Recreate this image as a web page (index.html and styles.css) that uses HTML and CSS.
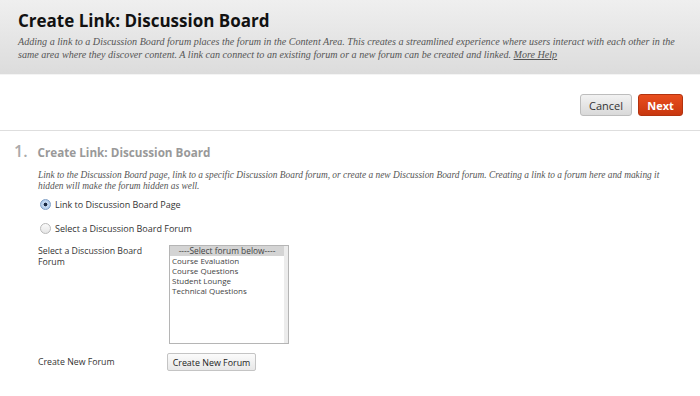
FILE: index.html
```html
<!DOCTYPE html>
<html>
<head>
<meta charset="utf-8">
<link rel="stylesheet" href="styles.css">
</head>
<body>
<div class="page-header">
  <h1 class="page-title">Create Link: Discussion Board</h1>
  <p class="page-desc">Adding a link to a Discussion Board forum places the forum in the Content Area. This creates a streamlined experience where users interact with each other in the<br>same area where they discover content. A link can connect to an existing forum or a new forum can be created and linked. <a class="help-link" href="#">More Help</a></p>
</div>
<div class="action-bar">
  <button class="btn btn-cancel">Cancel</button>
  <button class="btn btn-next">Next</button>
</div>
<div class="step">
  <div class="step-head">
    <span class="step-num">1.</span>
    <h2 class="step-title">Create Link: Discussion Board</h2>
  </div>
  <div class="step-body">
    <p class="step-instr">Link to the Discussion Board page, link to a specific Discussion Board forum, or create a new Discussion Board forum. Creating a link to a forum here and making it<br>hidden will make the forum hidden as well.</p>
    <label class="radio-row first"><span class="radio checked"></span>Link to Discussion Board Page</label>
    <label class="radio-row"><span class="radio"></span>Select a Discussion Board Forum</label>
    <div class="field-row">
      <div class="field-label">Select a Discussion Board<br>Forum</div>
      <div class="listbox">
        <div class="opt selected">----Select forum below----</div>
        <div class="opt">Course Evaluation</div>
        <div class="opt">Course Questions</div>
        <div class="opt">Student Lounge</div>
        <div class="opt">Technical Questions</div>
      </div>
    </div>
    <div class="field-row create-row">
      <div class="field-label">Create New Forum</div>
      <button class="btn-small">Create New Forum</button>
    </div>
  </div>
</div>
</body>
</html>
```
FILE: styles.css
```css
* { box-sizing: border-box; }
html, body { margin: 0; padding: 0; background: #fff; }
body {
  font-family: "Open Sans", "DejaVu Sans", sans-serif;
  color: #333;
  width: 700px;
  height: 396px;
  overflow: hidden;
}
.page-header {
  height: 75px;
  background: linear-gradient(#efefef, #dcdcdc);
  border-bottom: 1px solid #f4f4f4;
  padding: 8px 18px 0;
}
.page-title {
  margin: 0;
  font-family: "Open Sans", sans-serif;
  font-weight: 700;
  font-size: 17px;
  line-height: 26px;
  color: #111;
}
.page-desc {
  margin: 1px 0 0;
  font-family: "Liberation Serif", serif;
  font-style: italic;
  font-size: 10.1px;
  line-height: 13px;
  color: #555;
  white-space: nowrap;
}
.help-link { color: #555; }
.action-bar {
  height: 56px;
  display: flex;
  justify-content: flex-end;
  align-items: flex-start;
  gap: 6px;
  padding: 19px 17px 0 0;
  border-bottom: 1px solid #dedede;
}
.btn {
  height: 22px;
  border-radius: 3px;
  font-family: "Open Sans", sans-serif;
  font-size: 11px;
  padding: 0 8px;
  cursor: pointer;
}
.btn-cancel {
  background: linear-gradient(#f2f2f2, #d9d9d9);
  border: 1px solid #bdbdbd;
  color: #333;
  width: 52px;
}
.btn-next {
  background: linear-gradient(#e94e1e, #c8370f);
  border: 1px solid #b3330f;
  color: #fff;
  font-weight: 700;
  width: 45px;
}
.step { padding: 9px 0 0 14px; }
.step-head { display: flex; align-items: baseline; gap: 10px; }
.step-num {
  font-family: "Open Sans", sans-serif;
  font-size: 16px;
  color: #aaa;
  font-weight: 600;
}
.step-title {
  margin: 0;
  font-family: "Open Sans", sans-serif;
  font-size: 11.7px;
  font-weight: 700;
  color: #999;
}
.step-body { padding-left: 24px; }
.step-instr {
  margin: 8px 0 0;
  font-family: "Liberation Serif", serif;
  font-style: italic;
  font-size: 9.4px;
  line-height: 11px;
  color: #555;
  white-space: nowrap;
}
.radio-row {
  display: flex;
  align-items: center;
  gap: 4px;
  height: 24px;
  margin-left: 2px;
  font-family: "Open Sans", sans-serif;
  font-size: 9px;
  color: #333;
}
.radio-row.first { margin-top: 0; }
.radio {
  width: 11px;
  height: 11px;
  border-radius: 50%;
  border: 1px solid #b9b9b9;
  background: linear-gradient(#fafafa, #e6e6e6);
}
.radio.checked {
  border-color: #7f9fc6;
  background: radial-gradient(circle at 50% 50%, #1a2a44 0 1.6px, #c7dbf2 2.2px, #9fbfe6 100%);
}
.field-row {
  display: flex;
  align-items: flex-start;
  font-family: "Open Sans", sans-serif;
  font-size: 8.75px;
  color: #333;
  margin-top: 5px;
}
.field-label { width: 131px; line-height: 11px; padding-top: 1px; }
.listbox {
  width: 120px;
  height: 99px;
  border: 1px solid #b5b5b5;
  box-shadow: inset -4px 0 0 #ececec;
  background: #fff;
  padding: 0 4px 0 2px;
  font-size: 8px;
  line-height: 10px;
  color: #444;
}
.opt.selected { background: #d4d4d4; text-align: center; margin-left: -2px; font-size: 8.4px; }
.create-row { margin-top: 9px; align-items: center; }
.create-row .field-label { padding-top: 0; width: 129px; }
.btn-small {
  height: 18px;
  width: 89px;
  padding: 0;
  font-family: "Open Sans", sans-serif;
  font-size: 8.9px;
  color: #222;
  border: 1px solid #c4c4c4;
  border-radius: 2px;
  background: linear-gradient(#fbfbfb, #e8e8e8);
}
```
